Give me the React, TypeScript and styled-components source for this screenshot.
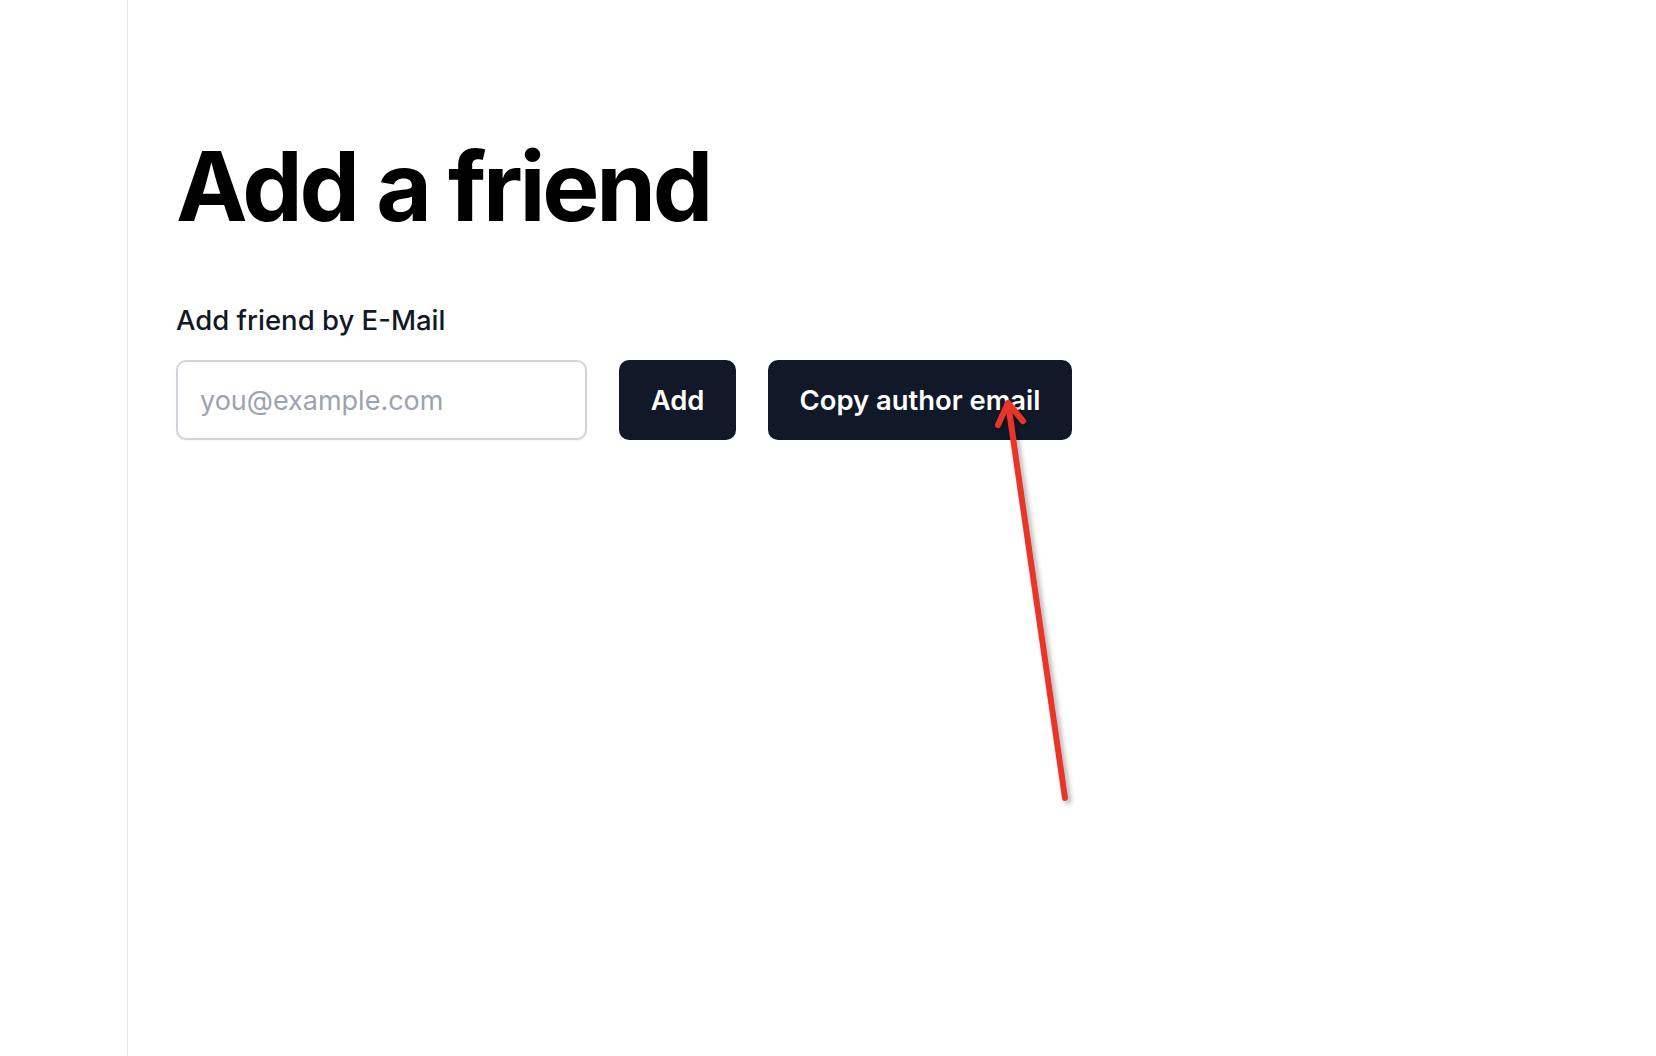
import React from "react";
import styled, { createGlobalStyle } from "styled-components";

const GlobalStyle = createGlobalStyle`
  html, body {
    margin: 0;
    padding: 0;
    background: #ffffff;
    font-family: Inter, "Noto Sans", "Liberation Sans", sans-serif;
  }
  * { box-sizing: border-box; }
`;

const Shell = styled.div`
  position: relative;
  display: flex;
  min-height: 100vh;
  width: 100%;
`;

const Sidebar = styled.aside`
  width: 128px;
  flex: none;
  border-right: 1px solid #e5e7eb;
`;

const Main = styled.main`
  flex: 1;
  padding: 138px 48px 48px 48px;
  display: flex;
  flex-direction: column;
`;

const Title = styled.h1`
  margin: 0;
  font-size: 96px;
  line-height: 1;
  font-weight: 700;
  letter-spacing: -0.034em;
  color: #000000;
`;

const Label = styled.label`
  margin-top: 66px;
  font-size: 27.5px;
  line-height: 40px;
  font-weight: 500;
  color: #111827;
`;

const Row = styled.div`
  margin-top: 20px;
  display: flex;
  align-items: center;
  gap: 32px;
`;

const Input = styled.input`
  width: 411px;
  height: 80px;
  padding: 0 22px;
  border: 2px solid #d1d5db;
  border-radius: 10px;
  font-family: inherit;
  font-size: 27px;
  color: #111827;
  outline: none;
  background: #fff;
  box-shadow: 0 1px 2px rgba(0, 0, 0, 0.05);
  &::placeholder {
    color: #9ca3af;
  }
`;

const Button = styled.button<{ $w: number }>`
  width: ${(p) => p.$w}px;
  height: 80px;
  border: none;
  border-radius: 10px;
  background: #111827;
  color: #ffffff;
  font-family: inherit;
  font-size: 27.4px;
  font-weight: 600;
  cursor: pointer;
`;

const Annotation = styled.svg`
  position: absolute;
  left: 0;
  top: 0;
  width: 1656px;
  height: 1056px;
  pointer-events: none;
  overflow: visible;
`;

export default function App() {
  return (
    <>
      <GlobalStyle />
      <Shell>
        <Sidebar />
        <Main>
          <Title>Add a friend</Title>
          <Label htmlFor="email">Add friend by E-Mail</Label>
          <Row>
            <Input id="email" type="email" placeholder="you@example.com" />
            <Button $w={117}>Add</Button>
            <Button $w={304}>Copy author email</Button>
          </Row>
        </Main>
        <Annotation viewBox="0 0 1656 1056">
          <defs>
            <filter id="shadow" x="-50%" y="-50%" width="200%" height="200%">
              <feDropShadow dx="3" dy="3" stdDeviation="2.5" floodColor="#000" floodOpacity="0.3" />
            </filter>
          </defs>
          <g
            filter="url(#shadow)"
            stroke="#e8362a"
            strokeWidth="6"
            strokeLinecap="round"
            strokeLinejoin="round"
            fill="none"
          >
            <line x1="1065" y1="798" x2="1008" y2="403" />
            <polyline points="998,425 1008,403 1023,421" />
          </g>
        </Annotation>
      </Shell>
    </>
  );
}
